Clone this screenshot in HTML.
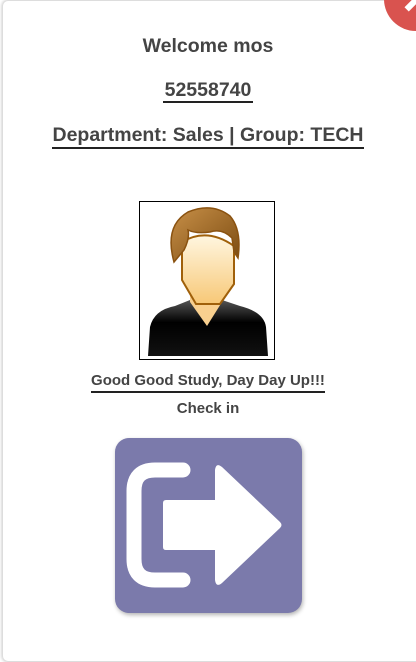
<!DOCTYPE html>
<html><head><style>
body{margin:0;width:416px;height:626px;overflow:hidden;background:#fff;font-family:"Liberation Sans",Arial,sans-serif;color:#444;position:relative}
.card{position:absolute;left:2px;top:0;width:430px;height:660px;border:1px solid #ddd;border-radius:6px;box-shadow:0 0 3px rgba(0,0,0,.25)}
.t{position:absolute;left:0;width:416px;text-align:center;font-weight:bold;white-space:nowrap}
.u{display:inline-block;border-bottom:2px solid #222;padding:0 2px}
</style></head><body>
<div class="card"></div>
<div style="position:absolute;left:384px;top:-33px;width:64px;height:64px;border-radius:50%;background:#d9534f"></div>
<div style="position:absolute;left:404px;top:0px;width:18px;height:6px;background:#fff;transform:rotate(-45deg)"></div>
<div class="t" style="top:35px;font-size:19.5px">Welcome mos</div>
<div class="t" style="top:79px;font-size:19.5px"><span class="u" style="line-height:22px">52558740</span></div>
<div class="t" style="top:124px;font-size:19.5px"><span class="u" style="line-height:23px;padding:0">Department: Sales | Group: TECH</span></div>
<div style="position:absolute;left:139px;top:201px;width:134px;height:157px;border:1px solid #000;background:#fff">
<svg width="134" height="157" viewBox="0 0 134 157">
<defs>
<linearGradient id="sk" x1="0" y1="0" x2="0" y2="1"><stop offset="0" stop-color="#fff6e0"/><stop offset="1" stop-color="#f7c877"/></linearGradient>
<linearGradient id="hr" x1="0" y1="0" x2="1" y2="1"><stop offset="0" stop-color="#c89048"/><stop offset="1" stop-color="#7a4a10"/></linearGradient>
<linearGradient id="bd" x1="0" y1="0" x2="0" y2="1"><stop offset="0" stop-color="#555"/><stop offset=".4" stop-color="#000"/><stop offset="1" stop-color="#111"/></linearGradient>
</defs>
<path d="M8 154 L10 125 Q14 108 35 104 L50 98 L67 112 L82 98 L100 104 Q124 110 126 125 L128 154 Z" fill="url(#bd)"/>
<path d="M50 90 L50 100 L67 124 L82 100 L82 90 Z" fill="#f9d08f"/>
<path d="M42 40 L42 78 L56 102 L80 102 L94 82 L94 44 Q67 25 42 40Z" fill="url(#sk)" stroke="#a0600a" stroke-width="2"/>
<path d="M34 60 Q24 24 48 10 Q72 0 90 14 Q102 28 98 56 L94 50 L92 36 Q82 26 70 30 Q56 32 48 28 Q50 36 44 48 Z" fill="url(#hr)" stroke="#8a5210" stroke-width="1.5"/>
</svg></div>
<div class="t" style="top:370px;font-size:15px"><span class="u" style="line-height:21px;padding:0">Good Good Study, Day Day Up!!!</span></div>
<div class="t" style="top:400px;font-size:15px">Check in</div>
<div style="position:absolute;left:115px;top:438px;width:187px;height:175px;border-radius:14px;background:#7b7aab;box-shadow:1px 2px 4px rgba(0,0,0,.3)"></div>
<svg style="position:absolute;left:0;top:0" width="416" height="626">
<path d="M183 470 L155 470 Q134 470 134 491 L134 559 Q134 580 155 580 L183 580" fill="none" stroke="#fff" stroke-width="15" stroke-linecap="round"/>
<path d="M166 500 L215 500 L215 470 Q216 462 222 467 L280 522 Q283 525 280 528 L222 583 Q216 588 215 580 L215 550 L166 550 Q163 550 163 547 L163 503 Q163 500 166 500Z" fill="#fff"/>
</svg>
</body></html>
